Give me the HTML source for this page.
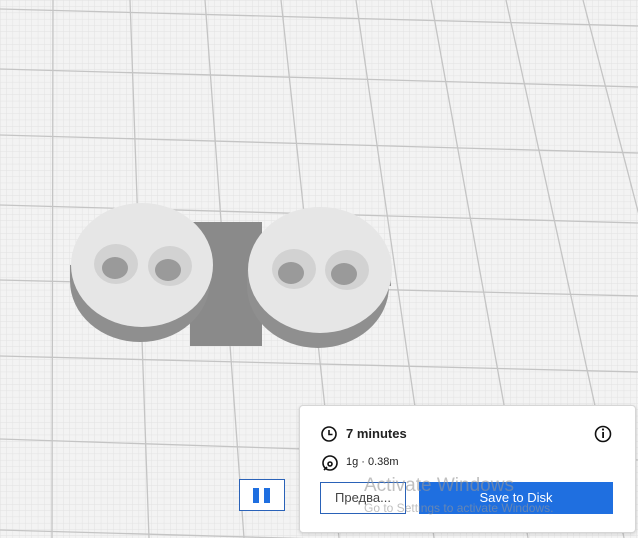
<!DOCTYPE html>
<html><head><meta charset="utf-8"><style>
body{margin:0;width:638px;height:538px;overflow:hidden;background:#f3f3f3;font-family:"Liberation Sans","DejaVu Sans",sans-serif;position:relative}
svg{position:absolute;left:0;top:0}
.panel{position:absolute;left:299px;top:405px;width:335px;height:126px;background:#fff;border:1px solid #d6d6d6;border-radius:4px;box-shadow:0 1px 3px rgba(0,0,0,.15)}
.t{position:absolute;color:#222}
.pause{position:absolute;left:239px;top:479px;width:44px;height:30px;border:1px solid #2a62b8;background:#fff}
.pause i{position:absolute;top:8px;width:6px;height:15px;background:#1f6fe0}
.btn1{position:absolute;left:320px;top:482px;width:84px;height:30px;border:1px solid #2a62b8;background:#fff;color:#444;font-size:13px;line-height:30px;text-align:center}
.btn2{position:absolute;left:419px;top:482px;width:194px;height:32px;background:#1f6fe0;color:#fff;font-size:13px;line-height:32px;text-align:center}
.wm{position:absolute;color:rgba(150,150,150,.6)}
</style></head><body>
<svg width="638" height="538">
<defs><pattern id="f" width="6.3" height="6.3" patternUnits="userSpaceOnUse"><path d="M0 0H6.3M0 0V6.3" stroke="#e2e2e2" stroke-width="1"/></pattern></defs>
<rect width="638" height="538" fill="url(#f)"/>
<g stroke="#c4c4c4" stroke-width="1.3">
<line x1="53" y1="0" x2="52" y2="538"/>
<line x1="130" y1="0" x2="149" y2="538"/>
<line x1="205" y1="0" x2="244" y2="538"/>
<line x1="281" y1="0" x2="339" y2="538"/>
<line x1="356" y1="0" x2="434" y2="538"/>
<line x1="431" y1="0" x2="528" y2="538"/>
<line x1="506" y1="0" x2="624" y2="538"/>
<line x1="583" y1="0" x2="723" y2="538"/>
<line x1="0" y1="9" x2="638" y2="26"/>
<line x1="0" y1="69" x2="638" y2="87"/>
<line x1="0" y1="135" x2="638" y2="153"/>
<line x1="0" y1="205" x2="638" y2="223"/>
<line x1="0" y1="280" x2="638" y2="296"/>
<line x1="0" y1="356" x2="638" y2="372"/>
<line x1="0" y1="439" x2="638" y2="460"/>
<line x1="0" y1="530" x2="638" y2="548"/>
</g>
<rect x="190" y="222" width="72" height="124" fill="#8a8a8a"/>
<ellipse cx="140" cy="281" rx="70" ry="61" fill="#8f8f8f"/>
<rect x="70" y="265" width="142" height="16" fill="#8f8f8f"/>
<ellipse cx="142" cy="265" rx="71" ry="62" fill="#e6e6e6"/>
<ellipse cx="318" cy="286" rx="71" ry="62" fill="#8f8f8f"/>
<rect x="247" y="270" width="144" height="16" fill="#8f8f8f"/>
<ellipse cx="320" cy="270" rx="72" ry="63" fill="#e6e6e6"/>
<g>
<ellipse cx="116" cy="264" rx="22" ry="20" fill="#d2d2d2"/><ellipse cx="115" cy="268" rx="13" ry="11" fill="#9a9a9a"/>
<ellipse cx="170" cy="266" rx="22" ry="20" fill="#d2d2d2"/><ellipse cx="168" cy="270" rx="13" ry="11" fill="#9a9a9a"/>
<ellipse cx="294" cy="269" rx="22" ry="20" fill="#d2d2d2"/><ellipse cx="291" cy="273" rx="13" ry="11" fill="#9a9a9a"/>
<ellipse cx="347" cy="270" rx="22" ry="20" fill="#d2d2d2"/><ellipse cx="344" cy="274" rx="13" ry="11" fill="#9a9a9a"/>
</g>
</svg>
<div class="panel"></div>
<svg width="638" height="538" style="pointer-events:none">
<g fill="none" stroke="#111" stroke-width="1.6">
<circle cx="329" cy="434" r="7"/><path d="M329 430V434.5H332.5"/>
<circle cx="603" cy="434" r="7.5"/>
<circle cx="330" cy="463" r="7"/><circle cx="330" cy="464" r="2"/><path d="M324 470L327 467"/>
</g>
<rect x="602.2" y="432" width="1.8" height="6" fill="#111"/><circle cx="603" cy="429.5" r="1.1" fill="#111"/>
</svg>
<div class="t" style="left:346px;top:426px;font-size:13px;font-weight:bold">7 minutes</div>
<div class="t" style="left:346px;top:456px;font-size:11px">1g · 0.38m</div>
<div class="pause"><i style="left:13px"></i><i style="left:24px"></i></div>
<div class="btn1">Предва...</div>
<div class="btn2">Save to Disk</div>
<div class="wm" style="left:364px;top:475px;font-size:19px">Activate Windows</div>
<div class="wm" style="left:364px;top:501px;font-size:12px">Go to Settings to activate Windows.</div>
</body></html>
